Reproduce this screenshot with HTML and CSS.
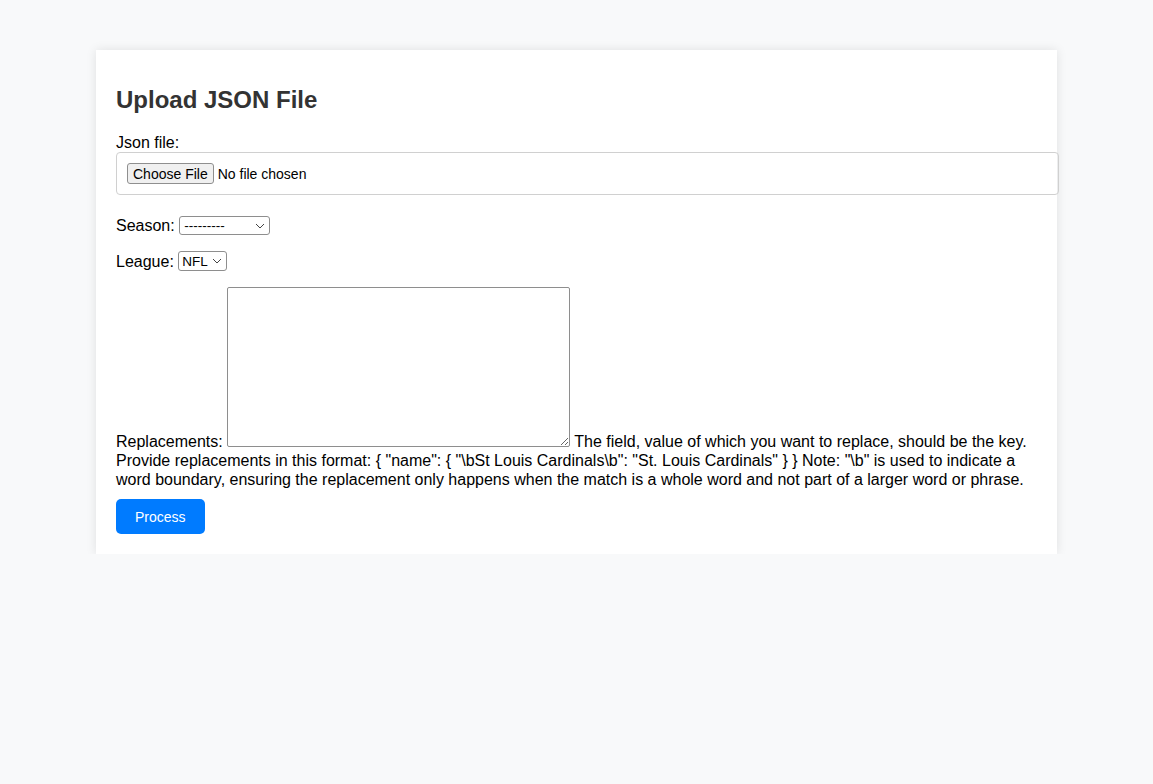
FILE: index.html
```html
<!DOCTYPE html>
<html lang="en">
<head>
<meta charset="utf-8">
<title>Upload JSON File</title>
<link rel="stylesheet" href="styles.css">
</head>
<body>
<div class="container">
  <h2 class="title">Upload JSON File</h2>
  <form class="form">
    <div class="group group-file">
      <label class="label" for="json_file">Json file:</label>
      <input class="file-input" type="file" id="json_file">
    </div>
    <div class="group">
      <label class="label" for="season">Season:</label>
      <select class="select select-season" id="season"><option>---------</option><option>2023</option></select>
    </div>
    <div class="group">
      <label class="label" for="league">League:</label>
      <select class="select select-league" id="league"><option>NFL</option><option>NBA</option></select>
    </div>
    <div class="group group-text">
      <label class="label" for="replacements">Replacements:</label>
      <textarea class="textarea" id="replacements"></textarea>
      <span class="help">The field, value of which you want to replace, should be the key. Provide replacements in this format: { "name": { "\bSt Louis Cardinals\b": "St. Louis Cardinals" } } Note: "\b" is used to indicate a word boundary, ensuring the replacement only happens when the match is a whole word and not part of a larger word or phrase.</span>
    </div>
    <button class="btn" type="button">Process</button>
  </form>
</div>
</body>
</html>
```
FILE: styles.css
```css
html, body {
  margin: 0;
  padding: 0;
}
body {
  background: #f8f9fa;
  font-family: "Liberation Sans", Arial, sans-serif;
  font-size: 16px;
  color: #000;
}
.container {
  max-width: 921px;
  margin: 50px auto 0;
  padding: 20px;
  background: #fff;
  box-shadow: 0 0 10px rgba(0, 0, 0, 0.1);
}
.title {
  font-size: 24px;
  font-weight: bold;
  color: #333;
  margin: 16px 0 20px;
}
.group {
  margin-bottom: 16px;
}
.group-file {
  margin-bottom: 21px;
}
.group-text {
  margin-bottom: 10px;
}
.label {
  font-size: 16px;
}
.file-input {
  display: block;
  width: 100%;
  padding: 10px;
  border: 1px solid #d0d0d0;
  border-radius: 4px;
  font-family: "Liberation Sans", Arial, sans-serif;
  font-size: 14px;
  box-sizing: content-box;
}
.file-input::file-selector-button {
  font-family: "Liberation Sans", Arial, sans-serif;
  font-size: 14px;
  padding: 1px 5px;
  height: 21px;
  margin-right: 4px;
  border: 1px solid #8f8f8f;
  border-radius: 3px;
  background: #f0f0f0;
  color: #000;
}
.select {
  appearance: none;
  -webkit-appearance: none;
  font-family: "Liberation Sans", Arial, sans-serif;
  font-size: 13.5px;
  color: #000;
  height: 19px;
  padding: 0 18px 0 4px;
  border: 1px solid #8e8e8e;
  border-radius: 3px;
  background-color: #fff;
  background-image: url("data:image/svg+xml,%3Csvg xmlns='http://www.w3.org/2000/svg' width='10' height='6' viewBox='0 0 10 6'%3E%3Cpath d='M1 1l4 4 4-4' fill='none' stroke='%23444' stroke-width='1'/%3E%3C/svg%3E");
  background-repeat: no-repeat;
  background-position: right 4px center;
  vertical-align: 1px;
}
.select-season { width: 91px; }
.select-league { width: 49px; height: 20px; padding: 0 14px 0 3px; }
.textarea {
  width: 337px;
  height: 154px;
  vertical-align: baseline;
  border: 1px solid #8e8e8e;
  border-radius: 2px;
  font-family: "Liberation Mono", monospace;
}
.help {
  line-height: 19px;
}
.btn {
  display: block;
  height: 35px;
  padding: 0 19px;
  background: #007bff;
  color: #fff;
  border: none;
  border-radius: 5px;
  font-family: "Liberation Sans", Arial, sans-serif;
  font-size: 14px;
  cursor: pointer;
}
```
